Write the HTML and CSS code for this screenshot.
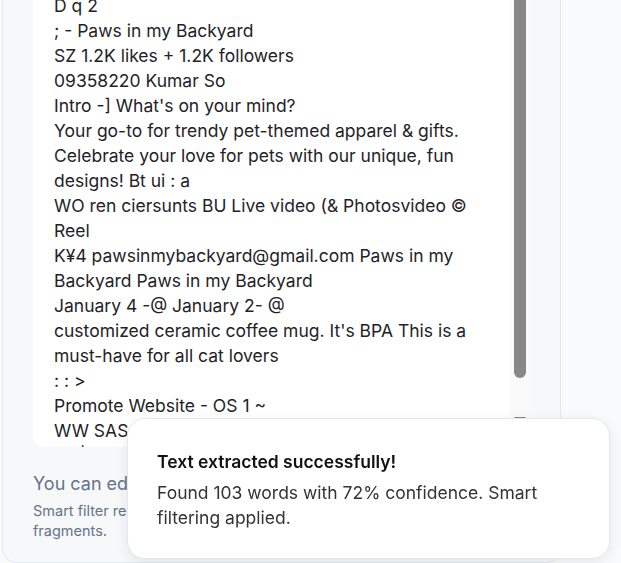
FILE: index.html
```html
<!DOCTYPE html>
<html>
<head>
<meta charset="utf-8">
<link rel="stylesheet" href="styles.css">
</head>
<body>
<div class="card">
  <div class="editor">
    <div class="editor-text">D q 2
; - Paws in my Backyard
SZ 1.2K likes + 1.2K followers
09358220 Kumar So
Intro -] What's on your mind?
Your go-to for trendy pet-themed apparel &amp; gifts.
Celebrate your love for pets with our unique, fun designs! Bt ui : a
WO ren ciersunts BU Live video (&amp; Photosvideo © Reel
K¥4 pawsinmybackyard@gmail.com Paws in my Backyard Paws in my Backyard
January 4 -@ January 2- @
customized ceramic coffee mug. It's BPA This is a must-have for all cat lovers
: : &gt;
Promote Website - OS 1 ~
WW SAS ae ee
9 : | 555 ee
Ee
a</div>
    <div class="scrollbar">
      <div class="thumb"></div>
      <div class="arrow"></div>
    </div>
  </div>
  <p class="hint">You can edit the extracted text before adding it to the field.</p>
  <p class="note">Smart filter removed navigation labels, buttons, counters and other short fragments.</p>
</div>
<div class="toast">
  <div class="toast-title">Text extracted successfully!</div>
  <div class="toast-body">Found 103 words with 72% confidence. Smart filtering applied.</div>
</div>
</body>
</html>
```
FILE: styles.css
```css
html, body {
  margin: 0;
  padding: 0;
}
body {
  background: #f8fafc;
  font-family: Inter, "Noto Sans", sans-serif;
  width: 621px;
  height: 563px;
  overflow: hidden;
}
.card {
  box-sizing: border-box;
  width: 559px;
  margin: -21px 0 0 2px;
  background: #f7f8f9;
  border: 1px solid #e2e8f0;
  border-radius: 14px;
  padding: 0 30px 21px 30px;
}
.editor {
  display: flex;
  height: 467px;
  background: #fff;
  border-radius: 12px;
  overflow: hidden;
}
.editor-text {
  flex: 1;
  padding: 13px 21px 0 21px;
  font-size: 17.5px;
  line-height: 25px;
  color: #1f2328;
  white-space: pre-wrap;
  overflow: hidden;
}
.scrollbar {
  width: 20px;
  flex: none;
  background: #fafafa;
  display: flex;
  flex-direction: column;
  align-items: center;
}
.thumb {
  width: 12px;
  height: 398px;
  background: #888;
  border-radius: 0 0 6px 6px;
}
.arrow {
  margin-top: 39px;
  width: 0;
  height: 0;
  border-left: 6px solid transparent;
  border-right: 6px solid transparent;
  border-top: 7px solid #888;
}
.hint {
  margin: 26px 0 0 0;
  font-size: 18px;
  line-height: 22px;
  color: #64748b;
  white-space: nowrap;
}
.note {
  margin: 6px 0 0 0;
  font-size: 14.5px;
  line-height: 20px;
  color: #64748b;
}
.toast {
  position: fixed;
  left: 127px;
  top: 418px;
  width: 483px;
  height: 141px;
  box-sizing: border-box;
  background: #fff;
  border: 1px solid #e5e7eb;
  border-radius: 18px;
  box-shadow: 0 4px 14px rgba(0,0,0,0.08);
  padding: 31px 30px 0 29px;
}
.toast-title {
  font-size: 17.5px;
  font-weight: 600;
  color: #111;
  line-height: 24px;
}
.toast-body {
  margin-top: 6px;
  font-size: 17.5px;
  line-height: 25px;
  color: #333;
}
```
